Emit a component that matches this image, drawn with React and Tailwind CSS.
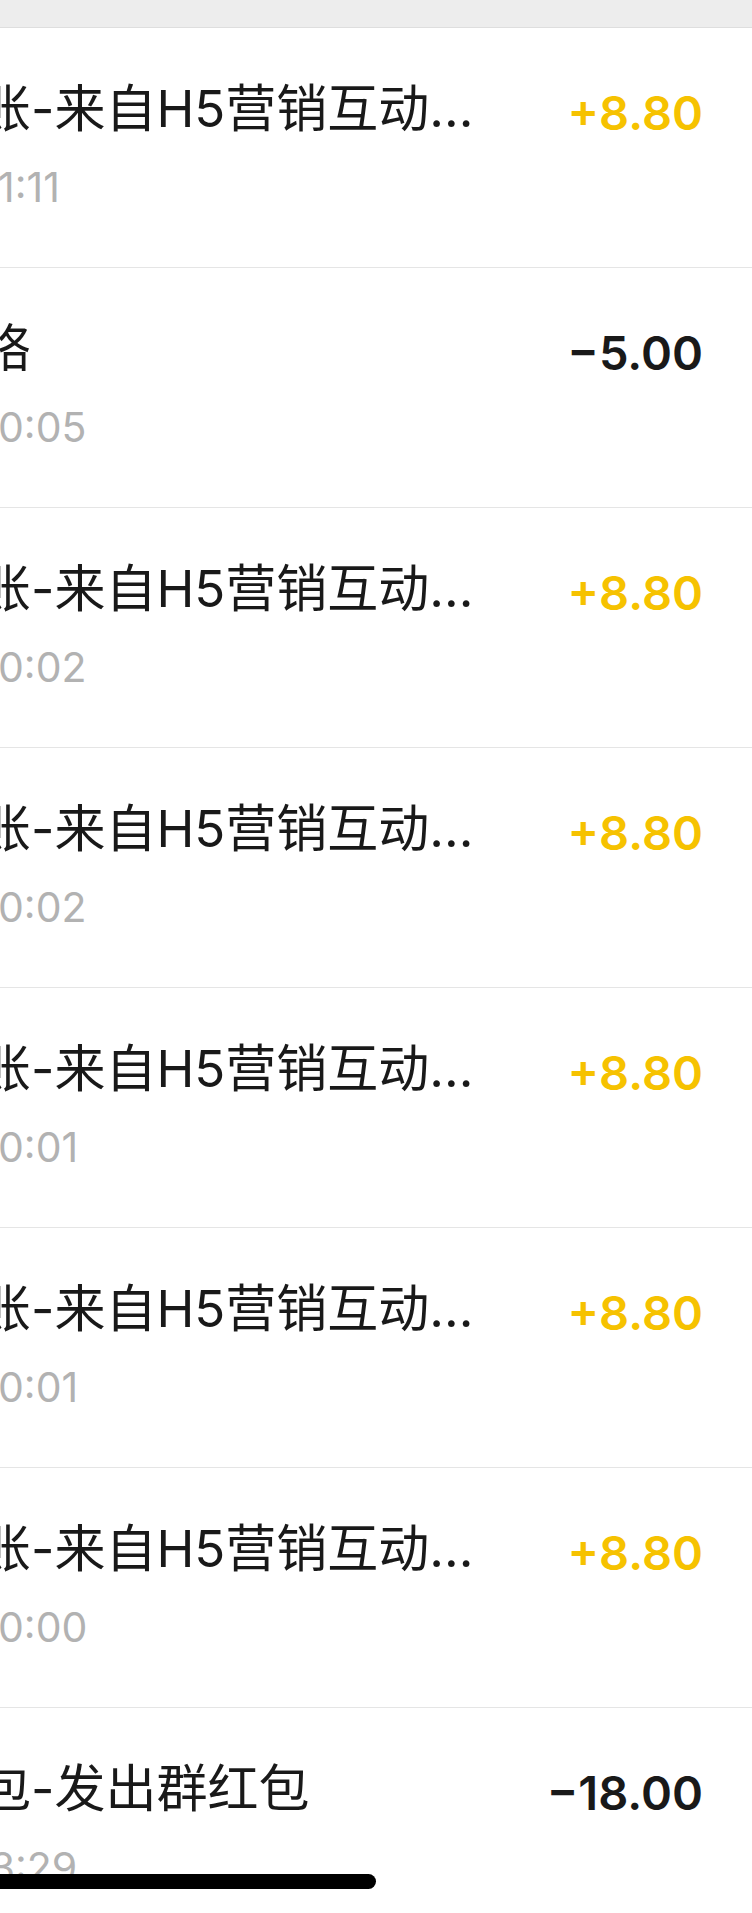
import React from "react";

const rows = [
  { title: "账-来自H5营销互动...", time: "21:11", amount: "+8.80", income: true },
  { title: "络", time: "20:05", amount: "−5.00", income: false },
  { title: "账-来自H5营销互动...", time: "20:02", amount: "+8.80", income: true },
  { title: "账-来自H5营销互动...", time: "20:02", amount: "+8.80", income: true },
  { title: "账-来自H5营销互动...", time: "20:01", amount: "+8.80", income: true },
  { title: "账-来自H5营销互动...", time: "20:01", amount: "+8.80", income: true },
  { title: "账-来自H5营销互动...", time: "20:00", amount: "+8.80", income: true },
  { title: "包-发出群红包", time: "13:29", amount: "−18.00", income: false },
];

const BillRow = ({ title, time, amount, income }) => (
  <div className="h-[240px] shrink-0 border-b border-[#E5E5E5] flex justify-between">
    <div className="flex flex-col -ml-[20px] pt-[51px]">
      <span className="text-[51px] leading-[60px] text-[#191919] whitespace-nowrap font-['Inter','Noto_Sans_CJK_SC',sans-serif]">
        {title}
      </span>
      <span className="mt-[26px] -ml-[7px] text-[41px] leading-[45px] text-[#B2B2B2] whitespace-nowrap font-['Inter',sans-serif]">
        {time}
      </span>
    </div>
    <div className="pr-[49px] pt-[55px]">
      <span
        className={`text-[47px] leading-[60px] font-semibold whitespace-nowrap font-['Inter',sans-serif] ${
          income ? "text-[#F6C200]" : "text-[#191919]"
        }`}
      >
        {amount}
      </span>
    </div>
  </div>
);

export default function App() {
  return (
    <div className="relative w-[752px] h-[1913px] overflow-hidden bg-white flex flex-col">
      <div className="h-[28px] shrink-0 bg-[#EDEDED] border-b border-[#DEDEDE]" />
      {rows.map((row, i) => (
        <BillRow key={i} {...row} />
      ))}
      <div className="absolute -left-[40px] top-[1874px] w-[416px] h-[15px] rounded-full bg-black" />
    </div>
  );
}
